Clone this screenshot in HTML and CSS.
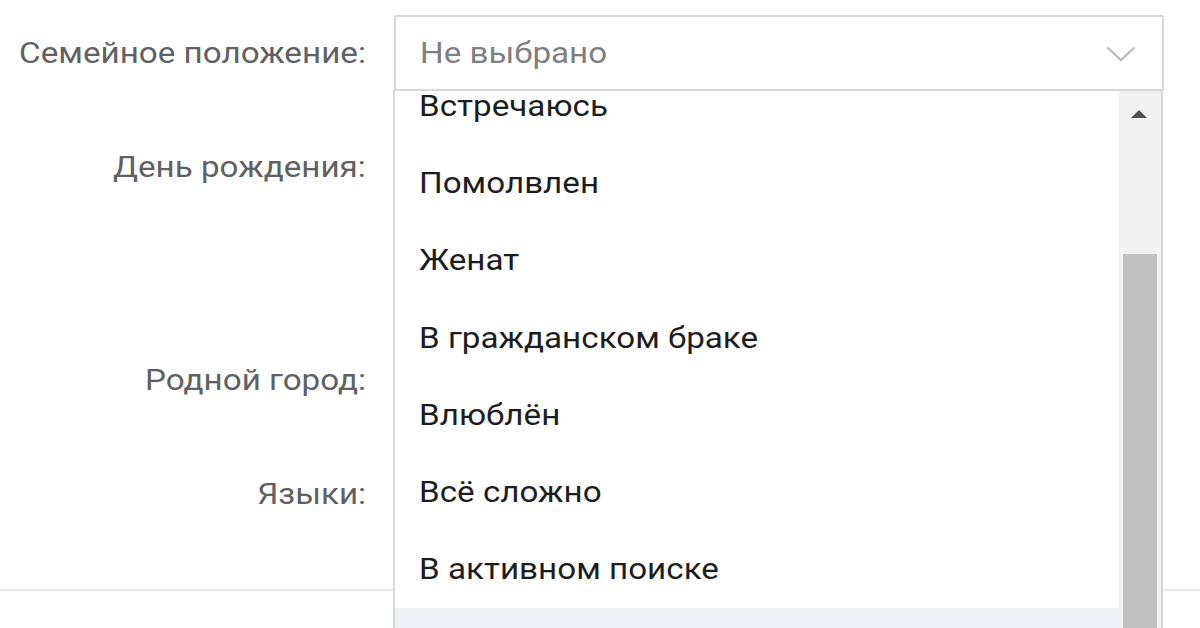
FILE: index.html
```html
<!DOCTYPE html>
<html lang="ru">
<head>
<meta charset="utf-8">
<link rel="stylesheet" href="styles.css">
</head>
<body>
<div class="page">
  <div class="form">
    <div class="row row-status">
      <div class="label"><span class="txt">Семейное положение:</span></div>
      <div class="control">
        <div class="select">
          <span class="select-text txt">Не выбрано</span>
          <svg class="chevron" width="30" height="16" viewBox="0 0 30 16"><polyline points="1.5,1.5 15,14 28.5,1.5" fill="none" stroke="#b5b9bd" stroke-width="2.2"/></svg>
        </div>
        <div class="dropdown">
          <div class="list">
            <div class="item"><span class="txt">Встречаюсь</span></div>
            <div class="item"><span class="txt">Помолвлен</span></div>
            <div class="item"><span class="txt">Женат</span></div>
            <div class="item"><span class="txt">В гражданском браке</span></div>
            <div class="item"><span class="txt">Влюблён</span></div>
            <div class="item"><span class="txt">Всё сложно</span></div>
            <div class="item"><span class="txt">В активном поиске</span></div>
            <div class="item item-hover">&nbsp;</div>
          </div>
          <div class="scrollbar">
            <div class="arrow-up"></div>
            <div class="thumb"></div>
          </div>
        </div>
      </div>
    </div>
    <div class="row row-birthday">
      <div class="label"><span class="txt">День рождения:</span></div>
      <div class="control"></div>
    </div>
    <div class="row row-city">
      <div class="label"><span class="txt">Родной город:</span></div>
      <div class="control"></div>
    </div>
    <div class="row row-lang">
      <div class="label"><span class="txt">Языки:</span></div>
      <div class="control"></div>
    </div>
  </div>
  <div class="divider"></div>
</div>
</body>
</html>
```

FILE: styles.css
```css
html, body {
  margin: 0;
  padding: 0;
  background: #ffffff;
  overflow: hidden;
}
.page {
  width: 1200px;
  height: 628px;
  overflow: hidden;
  font-family: Roboto, "Liberation Sans", Arial, sans-serif;
}
.txt {
  display: inline-block;
  transform: scaleX(1.145);
  transform-origin: left center;
}
.form {
  display: flex;
  flex-direction: column;
  gap: 38px;
  padding-top: 15px;
}
.row {
  display: flex;
  gap: 28px;
  min-height: 76px;
}
.label {
  width: 366px;
  flex: none;
  text-align: right;
  font-size: 29px;
  line-height: 76px;
  color: #5f6163;
}
.label .txt {
  transform-origin: right center;
}
.control {
  position: relative;
  width: 770px;
}
.row-birthday { min-height: 175px; }
.divider {
  margin-top: 57px;
  height: 2px;
  background: #e6e8eb;
}
.select {
  box-sizing: border-box;
  height: 76px;
  border: 2px solid #d5d9dd;
  border-radius: 2px;
  display: flex;
  align-items: center;
  justify-content: space-between;
  padding: 0 26px 0 24px;
  background: #fff;
}
.select-text {
  font-size: 29px;
  color: #7d7f82;
}
.chevron { display: block; margin-top: 2px; flex: none; }
.dropdown {
  position: absolute;
  top: 74px;
  left: -1px;
  width: 770px;
  height: 600px;
  box-sizing: border-box;
  border: 2px solid #d5d9dd;
  border-bottom: none;
  background: #fff;
  display: flex;
  overflow: hidden;
  z-index: 2;
}
.list {
  flex: 1;
  margin-top: -23px;
}
.item {
  height: 77.2px;
  line-height: 77.2px;
  padding-left: 24px;
  font-size: 29px;
  color: #1c1d1f;
  white-space: nowrap;
}
.item-hover {
  background: #eef1f5;
}
.scrollbar {
  width: 42px;
  background: #f1f1f1;
  position: relative;
  flex: none;
}
.arrow-up {
  position: absolute;
  left: 12px;
  top: 19px;
  width: 0;
  height: 0;
  border-left: 8px solid transparent;
  border-right: 8px solid transparent;
  border-bottom: 8px solid #4f4f4f;
}
.thumb {
  position: absolute;
  left: 4px;
  right: 4px;
  top: 163px;
  bottom: 0;
  background: #c1c1c1;
}
```
